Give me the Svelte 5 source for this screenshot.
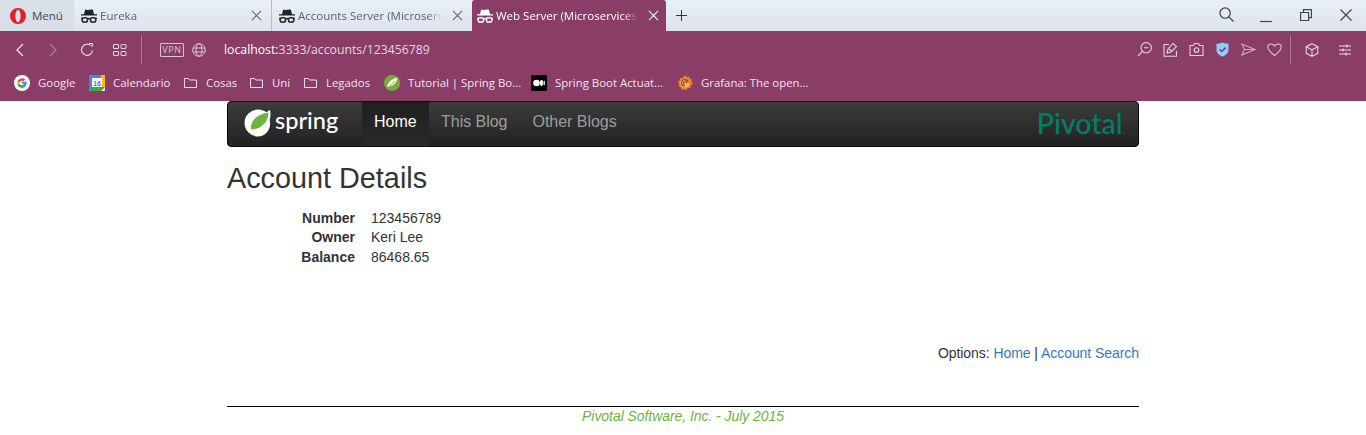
<script>
  const bookmarks = [
    { label: 'Google', icon: 'g', w: 75 },
    { label: 'Calendario', icon: 'cal', w: 95 },
    { label: 'Cosas', icon: 'f', w: 66 },
    { label: 'Uni', icon: 'f', w: 54 },
    { label: 'Legados', icon: 'f', w: 80 },
    { label: 'Tutorial | Spring Bo...', icon: 'sp', w: 147 },
    { label: 'Spring Boot Actuat...', icon: 'm', w: 146 },
    { label: 'Grafana: The open...', icon: 'gr', w: 140 }
  ];
</script>

{#snippet spy(color)}
  <svg class="spy" viewBox="0 0 16 14">
    <path fill={color} d="M4.200.5q1.800.8 3.800.3 2-.5 3.800-.3L13 5.200h3v1.400H0V5.200h3z" />
    <g fill="none" stroke={color} stroke-width="1.500">
      <rect x="1.200" y="8.700" width="5.300" height="4.300" rx="1.800" />
      <rect x="9.500" y="8.700" width="5.300" height="4.300" rx="1.800" />
      <path d="M6.500 10q1.500-.8 3 0M0 9.500h1.200M14.800 9.500H16" />
    </g>
  </svg>
{/snippet}

{#snippet x(color)}
  <svg class="x" viewBox="0 0 12 12" stroke={color} fill="none" stroke-width="1.200"><path d="M1 1l10 10M11 1L1 11" /></svg>
{/snippet}

<div class="chrome">
  <div class="tabs">
    <div class="menu">
      <svg viewBox="0 0 16 16" class="opera"><path fill="#e0202c" fill-rule="evenodd" d="M8 0a8 8 0 1 0 0 16A8 8 0 0 0 8 0zm0 1.800c1.500 0 2.600 2.800 2.600 6.200S9.500 14.200 8 14.200 5.400 11.400 5.400 8 6.500 1.800 8 1.800z" /></svg>
      <span>Menú</span>
    </div>
    <div class="tab t1">{@render spy('#222')}<span class="title">Eureka</span>{@render x('#666')}</div>
    <div class="tab t2">{@render spy('#222')}<span class="title">Accounts Server (Microservices</span>{@render x('#666')}</div>
    <div class="tab active">{@render spy('#fff')}<span class="title">Web Server (Microservices | Sp</span>{@render x('#fff')}</div>
    <svg class="plus" viewBox="0 0 12 12" stroke="#333" fill="none" stroke-width="1.100"><path d="M6 0v12M0 6h12" /></svg>
    <div class="grow"></div>
    <svg class="win search" viewBox="0 0 16 16" stroke="#444" fill="none" stroke-width="1.300"><circle cx="6.500" cy="6.500" r="5.500" /><path d="M10.500 10.500L15.500 15.500" /></svg>
    <svg class="win min" viewBox="0 0 12 16" stroke="#444" fill="none" stroke-width="1.200"><path d="M0 13.500h12" /></svg>
    <svg class="win restore" viewBox="0 0 12 12" stroke="#444" fill="none" stroke-width="1.200"><path d="M.6 3.500h8v8h-8zM3.500 3.500V.6h8v8H8.600" /></svg>
    <svg class="win close" viewBox="0 0 12 12" stroke="#444" fill="none" stroke-width="1.200"><path d="M.5.500l11 11M11.500.500l-11 11" /></svg>
  </div>

  <div class="toolbar">
    <svg class="ic back" viewBox="0 0 10 14" stroke="#f0e6ec" fill="none" stroke-width="1.300"><path d="M8 1L2 7l6 6" /></svg>
    <svg class="ic fwd" viewBox="0 0 10 14" stroke="#a87c95" fill="none" stroke-width="1.300"><path d="M2 1l6 6-6 6" /></svg>
    <svg class="ic reload" viewBox="0 0 14 14" stroke="#e8dde4" fill="none" stroke-width="1.200"><path d="M12.500 7.500A5.500 5.500 0 1 1 10.500 2.500" /><path d="M9 .5h3.200v3.500" /></svg>
    <svg class="ic grid" viewBox="0 0 14 14" stroke="#e8dde4" fill="none" stroke-width="1"><rect x=".5" y="1.500" width="5" height="4" rx=".5" /><rect x="8" y="1.500" width="5" height="4" rx=".5" /><rect x=".5" y="8.500" width="5" height="4" rx=".5" /><rect x="8" y="8.500" width="5" height="4" rx=".5" /></svg>
    <div class="sep first"></div>
    <span class="vpn">VPN</span>
    <svg class="ic globe" viewBox="0 0 14 14" stroke="#d9c6d2" fill="none" stroke-width="1"><circle cx="7" cy="7" r="6.300" /><ellipse cx="7" cy="7" rx="3" ry="6.300" /><path d="M1 5h12M1 9h12" /></svg>
    <div class="url"><span class="host">localhost:</span>3333/accounts/123456789</div>
    <div class="grow"></div>
    <div class="tools">
      <svg class="ic" viewBox="0 0 15 15" stroke="#e0d2db" fill="none" stroke-width="1.100"><circle cx="9.200" cy="5.800" r="5.200" /><path d="M5.500 9.500L.8 14.200M7 5.800h4.400" /></svg>
      <svg class="ic" viewBox="0 0 15 15" stroke="#e0d2db" fill="none" stroke-width="1.100"><path d="M6 2.500H1v11.700h12.500V9" /><path d="M4 11l1-4 5-5.500 3.500 3L8 10zM6 7l3 2.600" /></svg>
      <svg class="ic" viewBox="0 0 15 15" stroke="#e0d2db" fill="none" stroke-width="1.100"><path d="M1 3.500h3.500l1-2h4l1 2H14v10H1z" /><circle cx="7.500" cy="8" r="2.300" /></svg>
      <svg class="ic" viewBox="0 0 14 15"><path fill="#8fd0fb" d="M7 .5q3 1.300 6 1.300V8q0 4-6 6.800Q1 12 1 8V1.800Q4 1.800 7 .5z" /><path fill="none" stroke="#7d3f6a" stroke-width="1.600" d="M4 7.500l2.200 2L10 5.600" /></svg>
      <svg class="ic" viewBox="0 0 15 15" stroke="#c8acbd" fill="none" stroke-width="1.100"><path d="M.8 2l13.400 5.500L.8 13l2.700-5.500zM3.500 7.500h10.700" /></svg>
      <svg class="ic" viewBox="0 0 15 15" stroke="#d8c6d1" fill="none" stroke-width="1.100"><path d="M7.500 13.500C3 10 .8 7.800.8 5 .8 1.500 5.500.8 7.500 4 9.500.8 14.200 1.500 14.200 5c0 2.800-2.200 5-6.700 8.500z" /></svg>
    </div>
    <div class="sep second"></div>
    <svg class="ic cube" viewBox="0 0 14 14" stroke="#e0d2db" fill="none" stroke-width="1.100"><path d="M7 .7l5.800 3v6.600L7 13.300l-5.800-3V3.700zM1.200 3.700L7 6.800l5.800-3.100M7 6.800v6.500" /></svg>
    <svg class="ic sliders" viewBox="0 0 14 14" stroke="#ece2e8" fill="none" stroke-width="1.100"><path d="M1 3h12M1 7h12M1 11h12M9 1.500v3M5 5.500v3M8 9.500v3" /></svg>
  </div>

  <div class="bookmarks">
    {#each bookmarks as b}
      <div class="bm" style="width:{b.w}px">
        {#if b.icon === 'g'}
          <svg class="bi" viewBox="0 0 16 16"><circle cx="8" cy="8" r="8" fill="#fff" /><path d="M8 6.700h4.800q.5 5.300-4.800 5.800V10q1.800-.1 2.300-1.300H8z" fill="#4285f4" /><path d="M3.500 6.300A5 5 0 0 1 11.300 4.500L9.600 6.100A2.600 2.600 0 0 0 5.700 7.400z" fill="#ea4335" /><path d="M3.500 6.300L5.700 7.400v1.300L3.500 10.300q-.8-2 0-4z" fill="#fbbc05" /><path d="M3.500 10.300l2.200-1.600A2.600 2.600 0 0 0 9.600 10l1.600 1.600A5 5 0 0 1 3.500 10.300z" fill="#34a853" /></svg>
        {:else if b.icon === 'cal'}
          <svg class="bi" viewBox="0 0 16 16"><rect width="16" height="16" rx="1" fill="#fff" /><path d="M0 0h12v3H3v9H0z" fill="#4285f4" /><path d="M12 0h4v12h-3V3h-1z" fill="#fbbc05" /><path d="M0 12h12v4H1q-1 0-1-1z" fill="#34a853" /><path d="M12 12h4l-4 4z" fill="#ea4335" /><text x="8" y="10.800" text-anchor="middle" class="sixteen">16</text></svg>
        {:else if b.icon === 'f'}
          <svg class="bi folder" viewBox="0 0 14 16" stroke="#eadfe6" fill="none" stroke-width="1"><path d="M.5 3.500h4l1.200 1.500h6.800v7.500H.5z" /></svg>
        {:else if b.icon === 'sp'}
          <svg class="bi" viewBox="0 0 16 16"><circle cx="8" cy="8" r="8" fill="#74ad3c" /><path d="M13.500 2.500C13 8 8.500 12 3 12 4 6.500 8.500 3.500 13.500 2.500z" fill="#eef6e4" /><path d="M3 14L11 6" stroke="#74ad3c" stroke-width=".8" /></svg>
        {:else if b.icon === 'm'}
          <svg class="bi" viewBox="0 0 16 16"><rect width="16" height="16" rx="1.500" fill="#000" /><circle cx="5.500" cy="8" r="3.300" fill="#fff" /><ellipse cx="10.500" cy="8" rx="1.600" ry="3" fill="#fff" /><ellipse cx="13.200" cy="8" rx=".7" ry="2.600" fill="#fff" /></svg>
        {:else}
          <svg class="bi" viewBox="0 0 16 16"><path d="M8 .2l1.700 2 2.400-.8.600 2.400 2.500.9-.9 2.300L16 9l-2.200 1.300-.3 2.600-2.500-.2L9 15.500l-2.100-1.300-2.400.6-.7-2.400L1.500 11l.8-2.300L.4 6.900l2.200-1.300.4-2.500 2.400.3z" fill="#f3802a" /><path d="M8 3.500a4.500 4.500 0 1 0 4.500 5 1 1 0 0 0-.5-1H8.500" fill="#f7c23a" /><path d="M11 7.500A3.200 3.200 0 1 0 8 11M9.500 8.300A1.500 1.500 0 1 0 7.500 9.600" fill="none" stroke="#8a3d56" stroke-width="1.100" /></svg>
        {/if}
        <span>{b.label}</span>
      </div>
    {/each}
  </div>
</div>

<main class="page">
  <nav class="navbar">
    <div class="brand">
      <svg class="leaf" viewBox="0 0 28 28"><path d="M14 .5c4 0 6.500 1.500 8.500 2.800L26 .8c.8 3.700.6 7.500-.4 10.200C28 19 22 27.500 14 27.500A13.500 13.500 0 0 1 14 .5z" fill="#fff" /><path d="M24.500 3.500C24.500 13 17 20.500 7 20.500 6 12 13 5 24.500 3.500z" fill="#6db33f" /></svg>
      <span class="spring">spring</span>
    </div>
    <a class="nav on" href="#home">Home</a>
    <a class="nav" href="#blog">This Blog</a>
    <a class="nav" href="#other">Other Blogs</a>
    <div class="grow"></div>
    <span class="pivotal">Pivotal<small>.</small></span>
  </nav>

  <h1>Account Details</h1>

  <dl>
    <dt>Number</dt><dd>123456789</dd>
    <dt>Owner</dt><dd>Keri Lee</dd>
    <dt>Balance</dt><dd>86468.65</dd>
  </dl>

  <p class="options">Options: <a href="#home">Home</a> | <a href="#search">Account Search</a></p>

  <footer>Pivotal Software, Inc. - July 2015</footer>
</main>

<style>
  :global(body) { margin: 0; background: #fff; overflow: hidden; }
  .chrome { font-family: "Open Sans", "Noto Sans", sans-serif; font-size: 11.500px; height: 101px; background: #8a3d66; }
  .grow { flex: 1; }
  svg { display: block; flex: none; }

  .tabs { height: 31px; display: flex; align-items: stretch; background: linear-gradient(#e9eff6, #dbe3ec); color: #56636f; }
  .menu { width: 74px; display: flex; align-items: center; background: #d9dfe6; padding-left: 10px; gap: 6px; box-sizing: border-box; color: #3d4852; }
  .opera { width: 16px; height: 16px; }
  .tab { display: flex; align-items: center; box-sizing: border-box; padding-left: 7px; }
  .t1 { width: 197px; }
  .t2 { width: 201px; border-left: 1px solid #b5bec8; }
  .active { width: 194px; background: #8a3d66; color: #fff; padding-left: 5px; border-radius: 3px 3px 0 0; }
  .spy { width: 16px; height: 14px; margin-right: 3px; }
  .title { flex: 1; overflow: hidden; white-space: nowrap; min-width: 0; margin-right: 10px; mask-image: linear-gradient(to left, transparent, #000 14px); }
  .x { width: 11px; height: 11px; margin-right: 9px; }
  .active .x { margin-right: 7px; }
  .plus { width: 11px; height: 11px; align-self: center; margin-left: 10px; }
  .win { align-self: center; }
  .search { width: 15px; height: 15px; margin-right: 26px; margin-bottom: 3px; }
  .min { width: 12px; height: 16px; margin-right: 28px; }
  .restore { width: 12px; height: 12px; margin-right: 28px; margin-bottom: 2px; }
  .close { width: 12px; height: 12px; margin-right: 14px; margin-bottom: 2px; }

  .toolbar { height: 37px; display: flex; align-items: center; color: #f0e6ec; }
  .ic { width: 14px; height: 14px; }
  .back { width: 10px; margin-left: 15px; }
  .fwd { width: 10px; margin-left: 23px; }
  .reload { margin-left: 22px; }
  .grid { margin-left: 19px; }
  .sep { width: 1px; height: 29px; background: #a9789a; }
  .first { margin-left: 14px; }
  .vpn { margin-left: 18px; width: 22px; height: 12px; border: 1px solid #d9c6d2; border-radius: 1px; font-size: 9px; line-height: 12px; letter-spacing: .6px; text-align: center; color: #d9c6d2; }
  .globe { margin-left: 8px; }
  .url { margin-left: 18px; font-size: 12.250px; color: #e6d8e0; white-space: nowrap; }
  .host { color: #fff; }
  .tools { display: flex; gap: 11px; align-items: center; }
  .tools .ic { width: 15px; height: 15px; }
  .second { margin-left: 8px; }
  .cube { margin-left: 14px; }
  .sliders { margin-left: 19px; margin-right: 14px; }

  .bookmarks { height: 33px; display: flex; align-items: center; padding-left: 14px; padding-bottom: 4px; box-sizing: border-box; }
  .bm { display: flex; align-items: center; gap: 8px; color: #efe6eb; white-space: nowrap; flex: none; font-size: 11.400px; }
  .bi { width: 16px; height: 16px; }
  .bi.folder { width: 14px; }
  .sixteen { font: 700 7px "Liberation Sans", sans-serif; fill: #3b78e7; }

  .page { width: 912px; margin: 0 auto; font-family: "Liberation Sans", Arial, sans-serif; font-size: 14px; line-height: 20px; color: #333; }
  .navbar { height: 46px; box-sizing: border-box; display: flex; align-items: stretch; background: linear-gradient(#3c3c3c, #222); border: 1px solid #080808; border-radius: 4px; }
  .brand { width: 134px; display: flex; align-items: center; padding-left: 16px; gap: 3px; box-sizing: border-box; }
  .leaf { width: 28px; height: 28px; margin-bottom: 2px; }
  .spring { font: 500 23.500px/1 Lato, sans-serif; color: #fff; margin-bottom: 6px; }
  .nav { font-size: 16px; line-height: 40px; padding: 0 12.500px; color: #9d9d9d; text-decoration: none; letter-spacing: -.03px; }
  .nav.on { color: #fff; background: linear-gradient(#1f1f1f, #2a2a2a); padding: 0 12px; }
  .pivotal { font: 500 28.500px/42px Lato, sans-serif; color: #007f68; margin-right: 13px; }
  .pivotal small { font-size: 10px; }

  h1 { font-size: 28.800px; font-weight: 400; line-height: 33px; margin: 15px 0 14px; color: #333; }
  dl { display: grid; grid-template-columns: 128px 1fr; column-gap: 16px; margin: -0.300px 0 0; line-height: 19.500px; }
  dt { font-weight: 700; text-align: right; }
  dd { margin: 0; }
  .options { text-align: right; margin: 75.300px 0 0; letter-spacing: -.06px; }
  .options a { color: #337ab7; text-decoration: none; }
  footer { margin-top: 43px; border-top: 1px solid #000; text-align: center; font-style: italic; color: #6db33f; line-height: 19px; letter-spacing: -.06px; }
</style>
